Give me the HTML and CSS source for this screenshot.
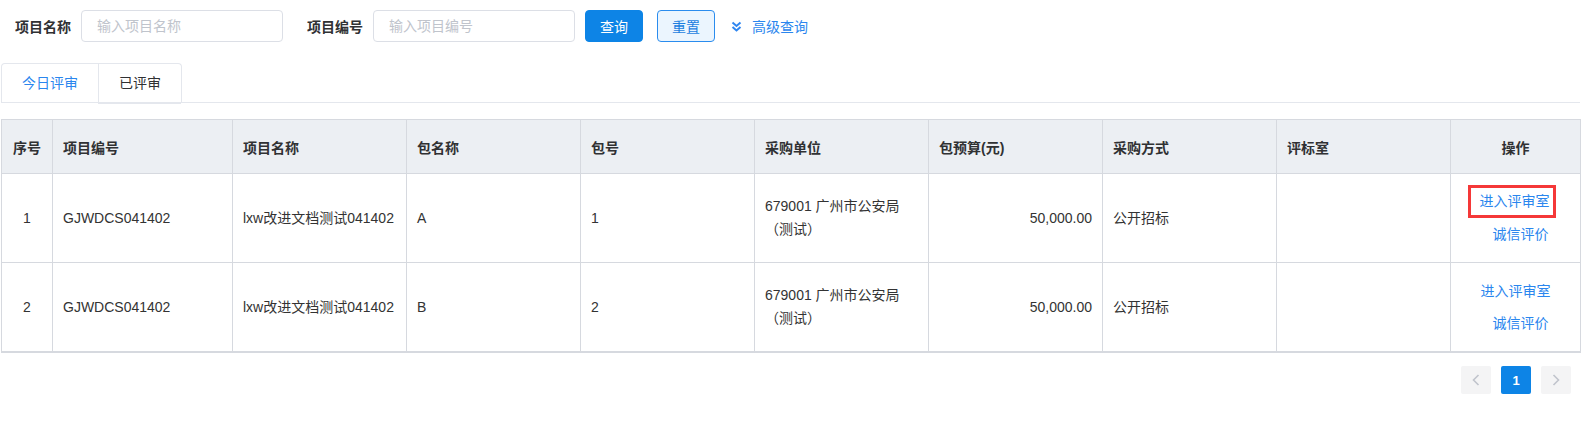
FILE: index.html
```html
<!DOCTYPE html>
<html lang="zh-CN">
<head>
<meta charset="utf-8">
<title>评审列表</title>
<link rel="stylesheet" href="styles.css">
</head>
<body>
<div class="page">
  <div class="search">
    <label class="field-label">项目名称</label>
    <input class="field-input" type="text" placeholder="输入项目名称">
    <label class="field-label second">项目编号</label>
    <input class="field-input" type="text" placeholder="输入项目编号">
    <button class="btn btn-primary" type="button">查询</button>
    <button class="btn btn-plain" type="button">重置</button>
    <a class="adv" href="#">
      <svg class="adv-icon" width="11" height="11" viewBox="0 0 11 11"><polyline points="1.5,1.5 5.5,5 9.5,1.5" fill="none" stroke="#2f86f0" stroke-width="2"/><polyline points="1.5,6 5.5,9.5 9.5,6" fill="none" stroke="#2f86f0" stroke-width="2"/></svg>
      <span>高级查询</span>
    </a>
  </div>

  <div class="tabs">
    <div class="tab-nav">
      <div class="tab active">今日评审</div>
      <div class="tab">已评审</div>
    </div>
  </div>

  <table class="grid">
    <colgroup>
      <col class="c-idx"><col class="c-code"><col class="c-std"><col class="c-std"><col class="c-std"><col class="c-std"><col class="c-std"><col class="c-std"><col class="c-std"><col class="c-ops">
    </colgroup>
    <thead>
      <tr>
        <th class="center">序号</th>
        <th>项目编号</th>
        <th>项目名称</th>
        <th>包名称</th>
        <th>包号</th>
        <th>采购单位</th>
        <th>包预算(元)</th>
        <th>采购方式</th>
        <th>评标室</th>
        <th class="center">操作</th>
      </tr>
    </thead>
    <tbody>
      <tr>
        <td class="center">1</td>
        <td>GJWDCS041402</td>
        <td>lxw改进文档测试041402</td>
        <td>A</td>
        <td>1</td>
        <td>679001 广州市公安局（测试）</td>
        <td class="right">50,000.00</td>
        <td>公开招标</td>
        <td></td>
        <td class="ops">
          <div class="op-line"><a class="op hl" href="#">进入评审室</a></div>
          <div class="op-line shift"><a class="op" href="#">诚信评价</a></div>
        </td>
      </tr>
      <tr>
        <td class="center">2</td>
        <td>GJWDCS041402</td>
        <td>lxw改进文档测试041402</td>
        <td>B</td>
        <td>2</td>
        <td>679001 广州市公安局（测试）</td>
        <td class="right">50,000.00</td>
        <td>公开招标</td>
        <td></td>
        <td class="ops">
          <div class="op-line"><a class="op" href="#">进入评审室</a></div>
          <div class="op-line shift"><a class="op" href="#">诚信评价</a></div>
        </td>
      </tr>
    </tbody>
  </table>

  <div class="pager">
    <button class="pg pg-nav" type="button" aria-label="上一页">
      <svg width="8" height="12" viewBox="0 0 8 12"><polyline points="6.5,1 1.5,6 6.5,11" fill="none" stroke="#c0c4cc" stroke-width="1.6"/></svg>
    </button>
    <button class="pg pg-active" type="button">1</button>
    <button class="pg pg-nav" type="button" aria-label="下一页">
      <svg width="8" height="12" viewBox="0 0 8 12"><polyline points="1.5,1 6.5,6 1.5,11" fill="none" stroke="#c0c4cc" stroke-width="1.6"/></svg>
    </button>
  </div>
</div>
</body>
</html>
```

FILE: styles.css
```css
* { box-sizing: border-box; }
html, body { margin: 0; padding: 0; background: #fff; }
body {
  font-family: "Liberation Sans", "Noto Sans CJK SC", sans-serif;
  font-size: 14px;
  color: #333;
}
.page { padding: 10px 1px 0 1px; }

.search {
  display: flex;
  align-items: center;
  height: 32px;
  padding-left: 14px;
}
.field-label {
  font-weight: bold;
  color: #303133;
  margin-right: 10px;
}
.field-label.second { margin-left: 24px; }
.field-input {
  width: 202px;
  height: 32px;
  border: 1px solid #dcdfe6;
  border-radius: 4px;
  padding: 0 15px;
  font-family: inherit;
  font-size: 14px;
  color: #606266;
  outline: none;
}
.field-input::placeholder { color: #c0c4cc; }
.btn {
  width: 58px;
  height: 32px;
  border-radius: 4px;
  font-family: inherit;
  font-size: 14px;
  padding: 0;
  cursor: pointer;
}
.btn-primary {
  margin-left: 10px;
  background: #0d84e6;
  border: 1px solid #0d84e6;
  color: #fff;
}
.btn-plain {
  margin-left: 14px;
  background: #ebf5fe;
  border: 1px solid #2a8cee;
  color: #1d7fe0;
}
.adv {
  display: flex;
  align-items: center;
  margin-left: 16px;
  color: #2a86ee;
  text-decoration: none;
}
.adv-icon { margin-right: 10px; }

.tabs {
  margin-top: 21px;
  border-bottom: 1px solid #e4e7ed;
  height: 40px;
}
.tab-nav {
  display: inline-flex;
  border: 1px solid #e4e7ed;
  border-bottom: none;
  border-radius: 4px 4px 0 0;
  height: 40px;
}
.tab {
  padding: 0 20px;
  line-height: 39px;
  height: 40px;
  color: #303133;
  border-left: 1px solid #e4e7ed;
  border-bottom: 1px solid #e4e7ed;
}
.tab:first-child { border-left: none; }
.tab.active {
  color: #2a86ee;
  border-bottom-color: #fff;
}

.grid {
  margin-top: 16px;
  width: 1579px;
  border-collapse: collapse;
  table-layout: fixed;
  border: 1px solid #d6d9df;
  border-bottom-width: 2px;
}
.c-idx { width: 51px; }
.c-code { width: 180px; }
.c-std { width: 174px; }
.c-ops { width: 130px; }
.grid th, .grid td {
  border: 1px solid #d6d9df;
  padding: 0 10px;
  text-align: left;
}
.grid th {
  height: 54px;
  background: #eceff3;
  font-weight: bold;
  color: #303133;
}
.grid td {
  line-height: 23px;
  color: #333;
  padding-top: 12px;
  padding-bottom: 12px;
}
.grid .center { text-align: center; }
.grid .right { text-align: right; }
.grid td.ops { text-align: center; padding-left: 0; padding-right: 0; }
.op-line { height: 32px; line-height: 32px; }
.op-line.shift { margin-left: 10px; }
.op {
  display: inline-block;
  color: #2a86ee;
  text-decoration: none;
}
.op.hl {
  padding: 0 6px 0 12px;
  margin-right: 8px;
  height: 33px;
  line-height: 33px;
  vertical-align: top;
  margin-top: -1px;
  outline: 3px solid #f53838;
  outline-offset: -3px;
}

.pager {
  display: flex;
  justify-content: flex-end;
  gap: 10px;
  margin-top: 13px;
  padding-right: 9px;
}
.pg {
  width: 30px;
  height: 28px;
  border: none;
  border-radius: 2px;
  padding: 0;
  display: flex;
  align-items: center;
  justify-content: center;
  font-family: inherit;
  font-size: 13px;
  font-weight: bold;
}
.pg-nav { background: #f4f4f5; }
.pg-active { background: #0d84e6; color: #fff; }
```
